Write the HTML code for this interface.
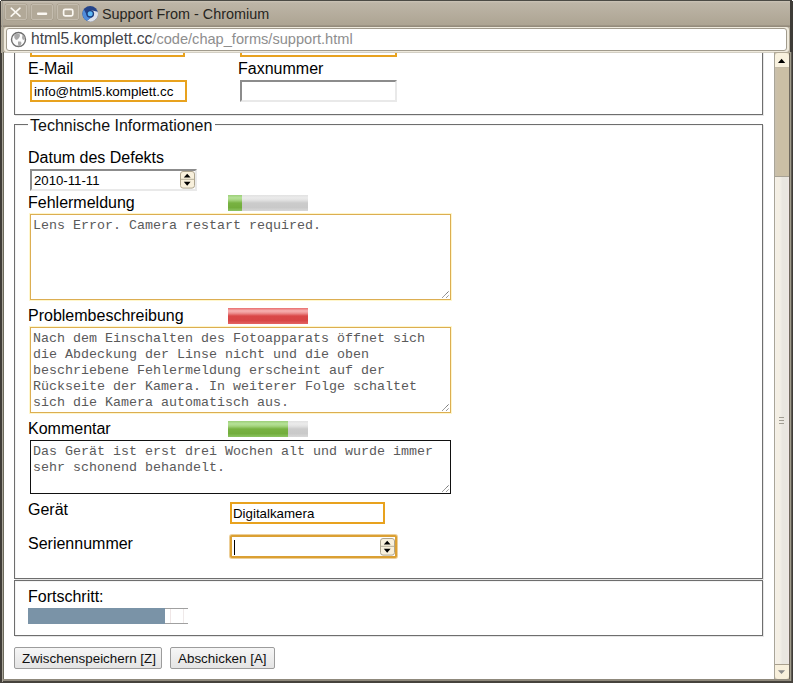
<!DOCTYPE html>
<html><head><meta charset="utf-8">
<style>
*{box-sizing:border-box;margin:0;padding:0}
html,body{width:793px;height:683px;overflow:hidden;background:#fff}
body{position:relative;font-family:"Liberation Sans",sans-serif;color:#000}
.a{position:absolute}
.lbl{position:absolute;font-size:16px;line-height:19px;white-space:pre;color:#000}
.mono{font-family:"Liberation Mono",monospace;font-size:13.33px;line-height:16px;color:#5a5a5a;white-space:pre}
.fs{position:absolute;border:1px solid #6e6e6e;box-shadow:1px 1px 0 #e6e6e6, inset 1px 1px 0 #f4f4f4}
.inp-o{position:absolute;border:2px solid #e8a21e;background:#fff}
.inset{position:absolute;border:2px solid;border-color:#8c8c8c #e9e9e9 #e9e9e9 #8c8c8c;background:#fff}
.ta{position:absolute;border:1px solid #dcae52;background:#fff;box-shadow:0 0 0 1px rgba(255,236,140,.45)}
.meter{position:absolute;width:80px;height:16px;background:linear-gradient(#e2e2e2 0%,#ebebeb 18%,#e2e2e2 32%,#cbcbcb 50%,#c9c9c9 78%,#d8d8d8 100%)}
.meter i{position:absolute;left:0;top:0;bottom:0}
.green{background:linear-gradient(#9ccf78 0%,#b6e198 18%,#a4d47e 32%,#78b242 50%,#72ad3c 78%,#8cc462 100%)}
.red{background:linear-gradient(#e86e6e 0%,#f7b2b2 18%,#ee9292 32%,#da4848 50%,#d84646 78%,#e46464 100%)}
.spin{position:absolute;width:15px;height:17px;border:1px solid #b8ae98;border-radius:3px;background:#f9f1dc}
.spin:before{content:"";position:absolute;left:3px;top:2px;border-left:4px solid transparent;border-right:4px solid transparent;border-bottom:5px solid #111}
.spin:after{content:"";position:absolute;left:3px;bottom:2px;border-left:4px solid transparent;border-right:4px solid transparent;border-top:5px solid #111}
.btn{position:absolute;height:22px;border:1px solid #9c9c9c;border-radius:2px;background:linear-gradient(#f6f6f6,#e4e4e4);font-size:13.4px;line-height:21px;padding-left:7px;color:#111;white-space:pre}
.grip{position:absolute;width:8px;height:8px}
</style></head>
<body>
<!-- window frame -->
<div class="a" style="left:0;top:0;width:793px;height:683px;background:#9a9486"></div>
<div class="a" style="left:0;top:0;width:793px;height:1px;background:#4b4a45"></div>
<div class="a" style="left:0;top:0;width:2px;height:683px;background:#403d38"></div>
<div class="a" style="left:790px;top:0;width:3px;height:52px;background:#3e3c38"></div><div class="a" style="left:789px;top:52px;width:1px;height:629px;background:#6e675c"></div><div class="a" style="left:790px;top:52px;width:1px;height:629px;background:#a09c8c"></div><div class="a" style="left:791px;top:52px;width:1px;height:629px;background:#5e5a52"></div><div class="a" style="left:792px;top:52px;width:1px;height:631px;background:#403d38"></div>
<div class="a" style="left:0;top:681px;width:793px;height:2px;background:#45423c"></div>
<div class="a" style="left:792px;top:0;width:1px;height:1px;background:#fff"></div>
<div class="a" style="left:0;top:0;width:1px;height:1px;background:#fff"></div>
<!-- title bar -->
<div class="a" style="left:1px;top:1px;width:789px;height:26px;background:linear-gradient(#cbc4b7 0,#bdb5a7 2px,#aca391 100%)"></div>
<div class="a" style="left:1px;top:25px;width:789px;height:2px;background:linear-gradient(#a39a8a,#8f8676)"></div>
<div class="a" style="left:1px;top:27px;width:789px;height:26px;background:#b3ab99"></div>
<div class="a" style="left:2px;top:1px;width:1px;height:681px;background:#a8a498"></div><div class="a" style="left:3px;top:52px;width:1px;height:629px;background:#6c6a5c"></div>
<!-- buttons -->
<div class="a" style="left:5px;top:4px;width:22px;height:16px;border:1px solid #c4bcae;border-radius:2px;background:#b2a998;box-shadow:0 0 0 0.5px #a69d8b"></div>
<div class="a" style="left:31px;top:4px;width:22px;height:16px;border:1px solid #c4bcae;border-radius:2px;background:#b2a998;box-shadow:0 0 0 0.5px #a69d8b"></div>
<div class="a" style="left:57px;top:4px;width:22px;height:16px;border:1px solid #c4bcae;border-radius:2px;background:#b2a998;box-shadow:0 0 0 0.5px #a69d8b"></div>
<svg class="a" style="left:0;top:0" width="100" height="27">
 <path d="M11.2 8.2 L20 16.2 M20 8.2 L11.2 16.2" stroke="#fbf8f2" stroke-width="1.6" stroke-linecap="round"/>
 <rect x="37" y="12.6" width="10.2" height="2.4" fill="#fbf8f2" rx="1"/>
 <rect x="63.6" y="9.4" width="9.2" height="6.4" fill="none" stroke="#fbf8f2" stroke-width="1.7" rx="1.5"/>
 <circle cx="90.2" cy="13.8" r="7.8" fill="#24448a"/>
 <path d="M91.13 10.32 L97.73 11.78 A7.8 7.8 0 0 1 86.90 20.87 L92.26 16.75 Z" fill="#dde1ea"/>
 <path d="M92.26 16.75 L86.90 20.87 A7.8 7.8 0 0 1 83.81 9.33 L86.94 15.32 Z" fill="#4f8cdb"/>
 <circle cx="90.2" cy="13.8" r="3.9" fill="#1f3f80"/>
 <circle cx="90.2" cy="13.8" r="2.5" fill="#5cb8f6"/>
</svg>
<div class="a" style="left:102px;top:5px;font-size:14.4px;line-height:18px;color:#262521;white-space:pre">Support From - Chromium</div>
<!-- address bar -->
<div class="a" style="left:4px;top:27px;width:785px;height:25px;border-radius:3px;background:#efeadd"></div>
<div class="a" style="left:6px;top:28px;width:781px;height:23px;border:1px solid #a19b8d;border-radius:3px;background:#fff"></div>
<svg class="a" style="left:10px;top:31px" width="18" height="18">
 <circle cx="8.5" cy="8.5" r="7" fill="#fcfcfc" stroke="#6f6f6f" stroke-width="1.4"/>
 <path d="M4.2 3.8 L7 2.4 L9.6 3 L10 5 L9 7 L7.5 8.6 L6 9 L4.4 7 Z M8 10.5 L10.6 10.4 L11.6 12 L10.2 15 L8.6 15.4 L8 13 Z M12.5 3.8 L14.6 5.5 L15 8.2 L13 9 L12 7 Z" fill="#a9a9a9"/>
</svg>
<div class="a" style="left:31px;top:30px;font-size:15.6px;line-height:18px;white-space:pre;color:#424248">html5.komplett.cc<span style="color:#8e8e8e;font-size:14.6px">/code/chap_forms/support.html</span></div>
<!-- content -->
<div class="a" style="left:4px;top:52px;width:770px;height:627px;background:#fff"></div>
<div class="a" style="left:4px;top:52px;width:770px;height:1px;background:#d3cfc4"></div>
<!-- scrollbar -->
<div class="a" style="left:774px;top:53px;width:1px;height:626px;background:#a9a598"></div>
<div class="a" style="left:775px;top:53px;width:14px;height:626px;background:linear-gradient(90deg,#c9c0ae 0,#cbbfa5 3px,#cbbfa5 100%)"></div>
<div class="a" style="left:775px;top:53px;width:14px;height:14px;background:#f8f1de;border-radius:3px 3px 0 0"></div>
<div class="a" style="left:775px;top:67px;width:14px;height:1px;background:#c5bba6"></div>
<svg class="a" style="left:775px;top:53px" width="13" height="14"><path d="M3 10 L10.2 10 L6.6 5.8 Z" fill="#000"/></svg>
<div class="a" style="left:775px;top:176px;width:14px;height:1px;background:#a8a295"></div>
<div class="a" style="left:775px;top:177px;height:487px;width:14px;background:linear-gradient(90deg,#f5f2ee 0,#f4efe4 10%,#f4efe4 30%,#f0ede6 40%,#e9e6e0 52%,#e9e6e0 90%,#efe6e4 94%,#f0e6e6 100%)"></div>
<div class="a" style="left:779px;top:417px;width:5px;height:1px;background:#a09c92;box-shadow:0 3px 0 #a09c92,0 6px 0 #a09c92"></div>
<div class="a" style="left:775px;top:664px;width:14px;height:1px;background:#a9a08e"></div>
<div class="a" style="left:775px;top:665px;width:14px;height:14px;background:#f8f0dc;border-radius:0 0 3px 3px"></div>
<svg class="a" style="left:775px;top:665px" width="13" height="14"><path d="M2.9 5.2 L10.1 5.2 L6.5 9 Z" fill="#8a8a8a"/></svg>

<div class="a" style="left:3px;top:679px;width:787px;height:2px;background:#8f897c"></div>

<!-- PAGE CONTENT -->
<div class="a" style="left:0;top:0;width:793px;height:683px;clip-path:inset(53px 19px 4px 4px)">
<!-- fieldset 1 -->
<div class="fs" style="left:14px;top:40px;width:749px;height:75px;border-top:none"></div>
<div class="inp-o" style="left:30px;top:30px;width:155px;height:27px"></div>
<div class="inp-o" style="left:240px;top:30px;width:157px;height:27px"></div>
<div class="lbl" style="left:28px;top:59px">E-Mail</div>
<div class="lbl" style="left:238px;top:59px">Faxnummer</div>
<div class="inp-o" style="left:30px;top:80px;width:157px;height:22px;font-size:13.4px;line-height:20px;padding-left:2px;white-space:pre">info@html5.komplett.cc</div>
<div class="inset" style="left:240px;top:80px;width:157px;height:22px"></div>

<!-- fieldset 2 -->
<div class="fs" style="left:14px;top:124px;width:749px;height:455px"></div>
<div class="a" style="left:28px;top:116px;background:#fff;padding:0 3px 0 2px;font-size:16px;line-height:19px;color:#111;white-space:pre">Technische Informationen</div>
<div class="lbl" style="left:28px;top:148px">Datum des Defekts</div>
<div class="inset" style="left:30px;top:169px;width:167px;height:22px;font-size:13.2px;line-height:19px;padding-left:2px;white-space:pre">2010-11-11</div>
<svg class="a" style="left:180px;top:171px" width="16" height="18"><rect x="0.5" y="0.5" width="14" height="16.6" rx="2.5" fill="#f8f0dc" stroke="#aea58f"/><line x1="1" y1="8.3" x2="14" y2="8.3" stroke="#b5ad98"/><path d="M3.8 6.6 L10.6 6.6 L7.2 2.8 Z M3.8 10.8 L10.6 10.8 L7.2 14.8 Z" fill="#000"/></svg>
<div class="lbl" style="left:28px;top:193px">Fehlermeldung</div>
<div class="meter" style="left:228px;top:195px"><i class="green" style="width:14px"></i></div>
<div class="ta mono" style="left:30px;top:214px;width:421px;height:86px;padding:3px 0 0 2px">Lens Error. Camera restart required.</div>
<svg class="a" style="left:440px;top:289px" width="11" height="11"><path d="M2.5 8.5 L8.6 2.4 M6.5 8.5 L8.6 6.4" stroke="#3a3a3a" stroke-width="1" stroke-dasharray="1 0.6"/></svg>
<div class="lbl" style="left:28px;top:306px">Problembeschreibung</div>
<div class="meter" style="left:228px;top:308px"><i class="red" style="width:80px"></i></div>
<div class="ta mono" style="left:30px;top:327px;width:421px;height:86px;padding:3px 0 0 2px">Nach dem Einschalten des Fotoapparats öffnet sich
die Abdeckung der Linse nicht und die oben
beschriebene Fehlermeldung erscheint auf der
Rückseite der Kamera. In weiterer Folge schaltet
sich die Kamera automatisch aus.</div>
<svg class="a" style="left:440px;top:402px" width="11" height="11"><path d="M2.5 8.5 L8.6 2.4 M6.5 8.5 L8.6 6.4" stroke="#3a3a3a" stroke-width="1" stroke-dasharray="1 0.6"/></svg>
<div class="lbl" style="left:28px;top:419px">Kommentar</div>
<div class="meter" style="left:228px;top:421px"><i class="green" style="width:60px"></i></div>
<div class="ta mono" style="left:30px;top:440px;width:421px;height:54px;padding:3px 0 0 2px;border-color:#111;box-shadow:none">Das Gerät ist erst drei Wochen alt und wurde immer
sehr schonend behandelt.</div>
<svg class="a" style="left:440px;top:483px" width="11" height="11"><path d="M2.5 8.5 L8.6 2.4 M6.5 8.5 L8.6 6.4" stroke="#3a3a3a" stroke-width="1" stroke-dasharray="1 0.6"/></svg>
<div class="lbl" style="left:28px;top:500px">Gerät</div>
<div class="inp-o" style="left:230px;top:502px;width:155px;height:22px;font-size:13.3px;line-height:20px;padding-left:1px;white-space:pre">Digitalkamera</div>
<div class="lbl" style="left:28px;top:534px">Seriennummer</div>
<div class="inp-o" style="left:230px;top:535px;width:167px;height:23px;border-color:#dba033;border-radius:2px;box-shadow:0 0 0 1px rgba(219,160,51,.5)"></div>
<div class="a" style="left:234px;top:540px;width:1px;height:15px;background:#000"></div>
<svg class="a" style="left:380px;top:538px" width="16" height="18"><rect x="0.5" y="0.5" width="14" height="16.6" rx="2.5" fill="#f8f0dc" stroke="#aea58f"/><line x1="1" y1="8.3" x2="14" y2="8.3" stroke="#b5ad98"/><path d="M3.8 6.6 L10.6 6.6 L7.2 2.8 Z M3.8 10.8 L10.6 10.8 L7.2 14.8 Z" fill="#000"/></svg>

<!-- fieldset 3 -->
<div class="fs" style="left:14px;top:580px;width:749px;height:56px"></div>
<div class="lbl" style="left:28px;top:587px">Fortschritt:</div>
<div class="a" style="left:28px;top:608px;width:160px;height:16px;border-top:1px solid #a0a0a0;border-bottom:1px solid #a0a0a0;background:#fff"></div>
<div class="a" style="left:28px;top:608px;width:137px;height:16px;background:#7a93a7"></div><div class="a" style="left:170px;top:609px;width:1px;height:14px;background:#efe6e6"></div><div class="a" style="left:183px;top:609px;width:1px;height:14px;background:#efe9e9"></div>

<div class="btn" style="left:14px;top:647px;width:148px">Zwischenspeichern [Z]</div>
<div class="btn" style="left:170px;top:647px;width:105px">Abschicken [A]</div>
</div>
</body></html>
